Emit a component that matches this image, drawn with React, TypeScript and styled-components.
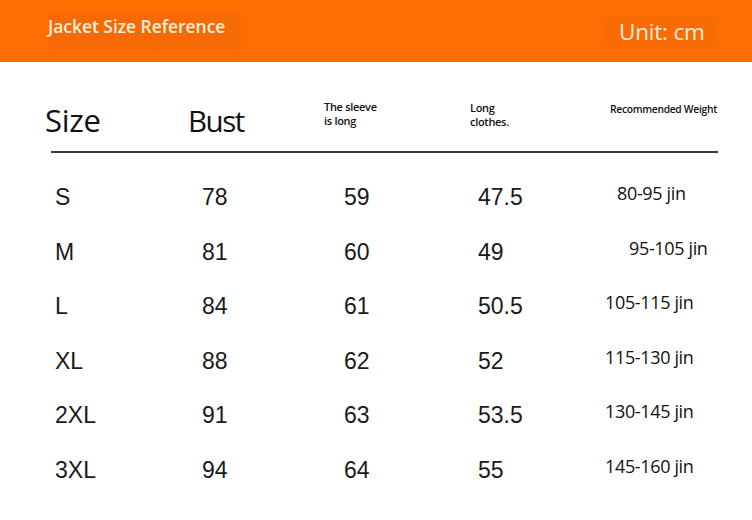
import React from "react";
import styled, {createGlobalStyle} from "styled-components";


const Columns = {
	head: "143px 136px 146px 140px 1fr",
	body: "147px 142px 134px 127px 1fr"
};

interface SizeRow {
	size: string,
	bust: string,
	sleeve: string,
	length: string,
	weight: string,
	indent: number
}

const Rows: SizeRow[] = [
	{size: "S", bust: "78", sleeve: "59", length: "47.5", weight: "80-95 jin", indent: 12},
	{size: "M", bust: "81", sleeve: "60", length: "49", weight: "95-105 jin", indent: 24},
	{size: "L", bust: "84", sleeve: "61", length: "50.5", weight: "105-115 jin", indent: 0},
	{size: "XL", bust: "88", sleeve: "62", length: "52", weight: "115-130 jin", indent: 0},
	{size: "2XL", bust: "91", sleeve: "63", length: "53.5", weight: "130-145 jin", indent: 0},
	{size: "3XL", bust: "94", sleeve: "64", length: "55", weight: "145-160 jin", indent: 0}
];


const GlobalStyle = createGlobalStyle`
	html, body {
		margin: 0;
		padding: 0;
		background: #fff;
	}
	body {
		font-family: "Open Sans", "Noto Sans", sans-serif;
		color: #111;
	}
`;

const Page = styled.div`
	width: 752px;
	height: 520px;
	overflow: hidden;
	background: #fff;
`;

const Banner = styled.header`
	height: 62px;
	background: #ff6e02;
	display: flex;
	justify-content: space-between;
	align-items: flex-start;
	padding: 0 34px 0 48px;
	box-sizing: border-box;
`;

const Title = styled.div`
	margin-top: 12px;
	width: 193px;
	height: 37px;
	background: #f66a06;
	color: #fdeedd;
	font-size: 17.5px;
	font-weight: 600;
	letter-spacing: -0.05px;
	line-height: 28px;
	white-space: nowrap;
`;

const Unit = styled.div`
	margin-top: 17px;
	width: 116px;
	height: 30px;
	padding-left: 17px;
	box-sizing: border-box;
	background: #f96b05;
	color: #fdeedd;
	font-size: 22.5px;
	letter-spacing: -0.2px;
	line-height: 30px;
`;

const HeadRow = styled.div`
	display: grid;
	grid-template-columns: ${Columns.head};
	align-items: start;
	height: 89px;
	padding: 39px 0 0 45px;
	box-sizing: border-box;
`;

const BigHead = styled.div<{$size: number, $spacing: number}>`
	margin-top: 4px;
	font-size: ${props => props.$size}px;
	line-height: 31px;
	letter-spacing: ${props => props.$spacing}px;
	color: #111;
`;

const SmallHead = styled.div<{$gap: number, $size?: number, $top?: number}>`
	margin-top: ${props => props.$top ?? 0}px;
	font-size: ${props => props.$size ?? 11}px;
	font-weight: 600;
	line-height: ${props => props.$gap}px;
	letter-spacing: -0.3px;
	color: #111;
	white-space: nowrap;
`;

const Rule = styled.hr`
	margin: 0 34px 0 51px;
	border: 0;
	height: 2px;
	background: #3c3c3c;
`;

const Body = styled.div`
	padding-top: 17px;
`;

const BodyRow = styled.div`
	display: grid;
	grid-template-columns: ${Columns.body};
	height: 54.5px;
	padding-left: 55px;
	align-items: start;
`;

const Value = styled.div`
	font-family: "Liberation Sans", Arial, sans-serif;
	font-size: 23px;
	line-height: 54px;
	color: #1a1a1a;
`;

const Weight = styled.div<{$indent: number}>`
	font-size: 18px;
	letter-spacing: -0.35px;
	line-height: 47px;
	padding-left: ${props => props.$indent}px;
	color: #111;
	white-space: nowrap;
`;


export default function App()
{
	return (
		<Page>
			<GlobalStyle />
			<Banner>
				<Title>Jacket Size Reference</Title>
				<Unit>Unit: cm</Unit>
			</Banner>
			<HeadRow>
				<BigHead $size={31} $spacing={-0.3}>Size</BigHead>
				<BigHead $size={29.5} $spacing={-1.5}>Bust</BigHead>
				<SmallHead $gap={14} $top={-1}>The sleeve<br />is long</SmallHead>
				<SmallHead $gap={14}>Long<br />clothes.</SmallHead>
				<SmallHead $gap={13} $size={10.3} $top={2}>Recommended Weight</SmallHead>
			</HeadRow>
			<Rule />
			<Body>
				{Rows.map(row => (
					<BodyRow key={row.size}>
						<Value>{row.size}</Value>
						<Value>{row.bust}</Value>
						<Value>{row.sleeve}</Value>
						<Value>{row.length}</Value>
						<Weight $indent={row.indent}>{row.weight}</Weight>
					</BodyRow>
				))}
			</Body>
		</Page>
	);
}
